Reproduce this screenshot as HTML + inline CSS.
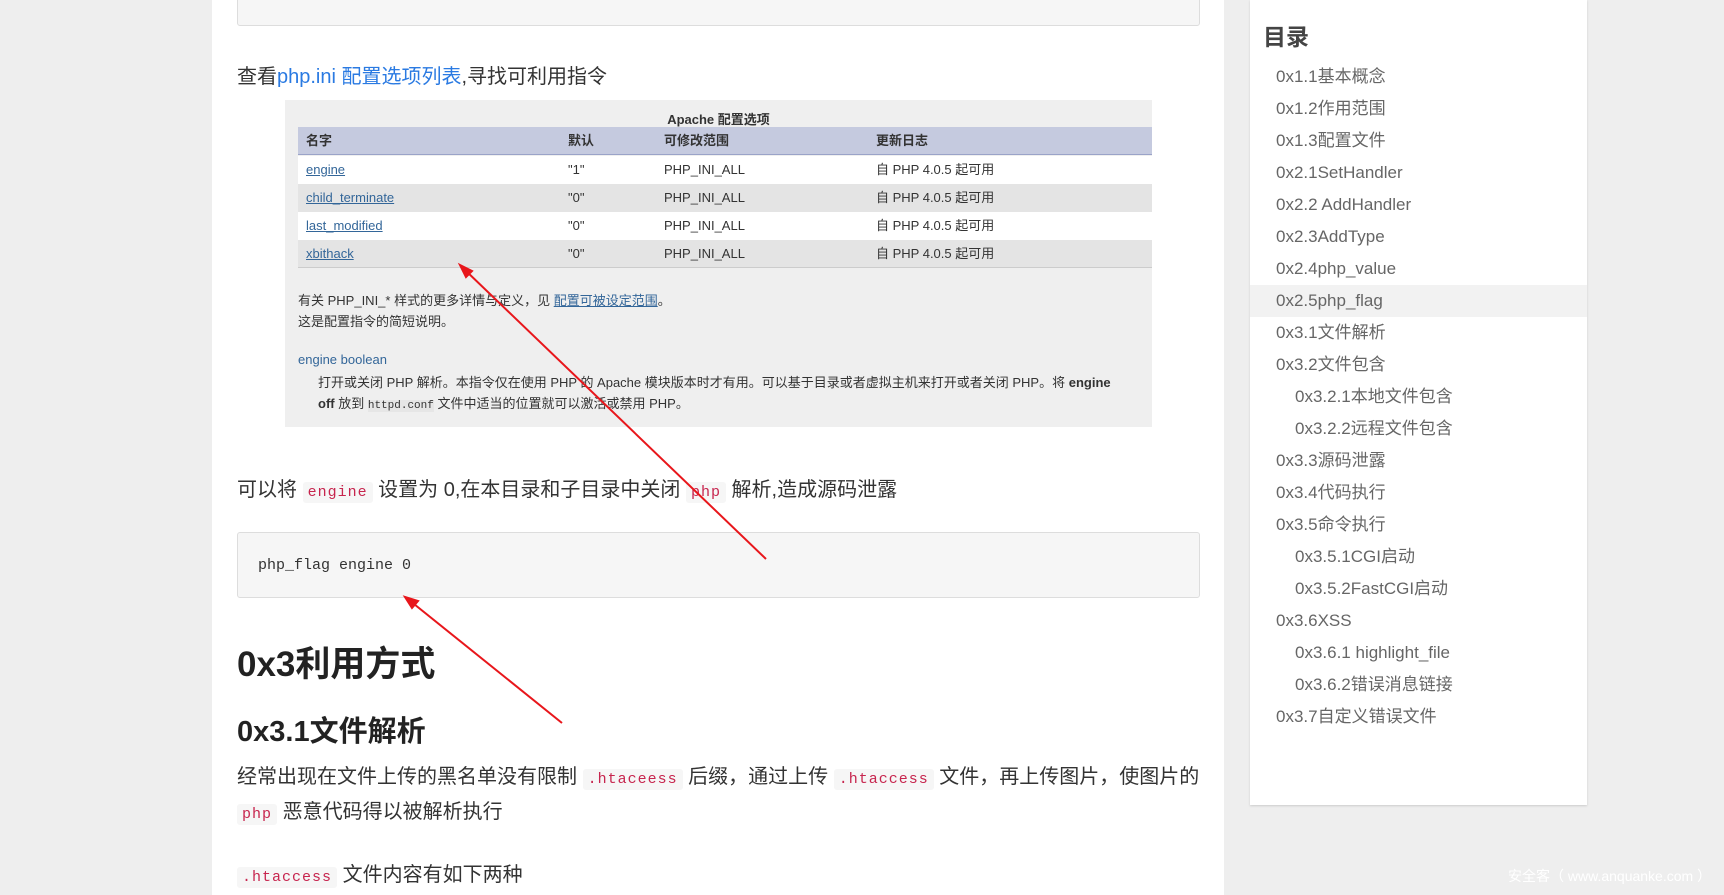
<!DOCTYPE html>
<html><head><meta charset="utf-8"><style>
*{margin:0;padding:0;box-sizing:border-box}
body{width:1724px;height:895px;background:#eeeeee;position:relative;overflow:hidden;font-family:"Liberation Sans","Noto Sans CJK SC",sans-serif;color:#333}
.main{position:absolute;left:212px;top:0;width:1012px;height:895px;background:#fff}
.code{position:absolute;left:237px;width:963px;background:#f6f6f6;border:1px solid #ddd;border-radius:3px;font-family:"Liberation Mono",monospace;font-size:15px;color:#333}
.p{position:absolute;left:237px;font-size:20px;color:#333;white-space:nowrap}
.ic{font-family:"Liberation Mono",monospace;font-size:15px;color:#c7254e;background:#f6f6f6;padding:2px 5px;border-radius:3px;letter-spacing:1px}
a{color:#2a7ae2;text-decoration:none}
.img{position:absolute;left:285px;top:100px;width:867px;height:327px;background:#efefef;font-size:13px;color:#333}
.row{position:absolute;left:0;width:854px;height:28px;line-height:28px}
.row span{position:absolute}
.lk{color:#336699;text-decoration:underline}
.side{position:absolute;left:1250px;top:0;width:337px;height:805px;background:#fff;box-shadow:0 1px 2px #ccc}
.side h3{position:absolute;left:13px;top:18px;font-size:23px;color:#444}
.it{position:absolute;left:0;width:337px;height:32px;line-height:32px;padding-left:26px;font-size:17px;color:#666;white-space:nowrap}
.it.s{padding-left:45px}
</style></head><body>
<div class="main"></div>
<div class="code" style="top:-10px;height:36px"></div>
<div class="p" style="top:60px">查看<a>php.ini 配置选项列表</a>,寻找可利用指令</div>
<div class="img">
 <div style="position:absolute;top:9px;left:0;width:867px;text-align:center;font-weight:bold;font-size:13px">Apache 配置选项</div>
 <div class="row" style="top:27px;left:13px;background:#c5cadf;border-bottom:1px solid #9aa3c8;font-weight:bold;width:854px"><span style="left:8px">名字</span><span style="left:270px">默认</span><span style="left:366px">可修改范围</span><span style="left:578px">更新日志</span></div>
 <div class="row" style="top:56px;left:13px;background:#fff"><span style="left:8px" class="lk">engine</span><span style="left:270px">"1"</span><span style="left:366px">PHP_INI_ALL</span><span style="left:578px">自 PHP 4.0.5 起可用</span></div>
 <div class="row" style="top:84px;left:13px;background:#e4e4e4"><span style="left:8px" class="lk">child_terminate</span><span style="left:270px">"0"</span><span style="left:366px">PHP_INI_ALL</span><span style="left:578px">自 PHP 4.0.5 起可用</span></div>
 <div class="row" style="top:112px;left:13px;background:#fff"><span style="left:8px" class="lk">last_modified</span><span style="left:270px">"0"</span><span style="left:366px">PHP_INI_ALL</span><span style="left:578px">自 PHP 4.0.5 起可用</span></div>
 <div class="row" style="top:140px;left:13px;background:#e4e4e4;border-bottom:1px solid #ccc"><span style="left:8px" class="lk">xbithack</span><span style="left:270px">"0"</span><span style="left:366px">PHP_INI_ALL</span><span style="left:578px">自 PHP 4.0.5 起可用</span></div>
 <div style="position:absolute;left:13px;top:190px;line-height:21px">有关 PHP_INI_* 样式的更多详情与定义，见 <span class="lk">配置可被设定范围</span>。<br>这是配置指令的简短说明。</div>
 <div style="position:absolute;left:13px;top:252px;color:#336699">engine boolean</div>
 <div style="position:absolute;left:33px;top:272px;line-height:21px;white-space:nowrap">打开或关闭 PHP 解析。本指令仅在使用 PHP 的 Apache 模块版本时才有用。可以基于目录或者虚拟主机来打开或者关闭 PHP。将 <b>engine</b><br><b>off</b> 放到 <span style="font-family:'Liberation Mono';font-size:11px;background:#e6e6e6">httpd.conf</span> 文件中适当的位置就可以激活或禁用 PHP。</div>
</div>
<div class="p" style="top:473px">可以将 <span class="ic">engine</span> 设置为 0,在本目录和子目录中关闭 <span class="ic">php</span> 解析,造成源码泄露</div>
<div class="code" style="top:532px;height:66px;padding:24px 20px;line-height:18px">php_flag engine 0</div>
<div class="p" style="top:636px;font-size:35px;font-weight:bold;color:#222">0x3利用方式</div>
<div class="p" style="top:708px;font-size:29px;font-weight:bold;color:#222">0x3.1文件解析</div>
<div class="p" style="top:761px;line-height:33px">经常出现在文件上传的黑名单没有限制 <span class="ic">.htaceess</span> 后缀，通过上传 <span class="ic">.htaccess</span> 文件，再上传图片，使图片的<br><span class="ic">php</span> 恶意代码得以被解析执行</div>
<div class="p" style="top:858px"><span class="ic">.htaccess</span> 文件内容有如下两种</div>
<svg style="position:absolute;left:0;top:0" width="1724" height="895"><g stroke="#e8161b" stroke-width="2" fill="#e8161b"><line x1="766" y1="559" x2="464" y2="269"/><polygon points="460,265 472,271 466,277" /><line x1="562" y1="723" x2="409" y2="600"/><polygon points="405,597 418,601 412,608"/></g></svg>
<div class="side">
<h3>目录</h3>
<div class="it" style="top:61px">0x1.1基本概念</div>
<div class="it" style="top:93px">0x1.2作用范围</div>
<div class="it" style="top:125px">0x1.3配置文件</div>
<div class="it" style="top:157px">0x2.1SetHandler</div>
<div class="it" style="top:189px">0x2.2 AddHandler</div>
<div class="it" style="top:221px">0x2.3AddType</div>
<div class="it" style="top:253px">0x2.4php_value</div>
<div class="it" style="top:285px;background:#f2f2f2">0x2.5php_flag</div>
<div class="it" style="top:317px">0x3.1文件解析</div>
<div class="it" style="top:349px">0x3.2文件包含</div>
<div class="it s" style="top:381px">0x3.2.1本地文件包含</div>
<div class="it s" style="top:413px">0x3.2.2远程文件包含</div>
<div class="it" style="top:445px">0x3.3源码泄露</div>
<div class="it" style="top:477px">0x3.4代码执行</div>
<div class="it" style="top:509px">0x3.5命令执行</div>
<div class="it s" style="top:541px">0x3.5.1CGI启动</div>
<div class="it s" style="top:573px">0x3.5.2FastCGI启动</div>
<div class="it" style="top:605px">0x3.6XSS</div>
<div class="it s" style="top:637px">0x3.6.1 highlight_file</div>
<div class="it s" style="top:669px">0x3.6.2错误消息链接</div>
<div class="it" style="top:701px">0x3.7自定义错误文件</div>
</div>
<div style="position:absolute;left:1508px;top:866px;font-size:14px;color:#fff">安全客（ www.anquanke.com ）</div>
</body></html>
